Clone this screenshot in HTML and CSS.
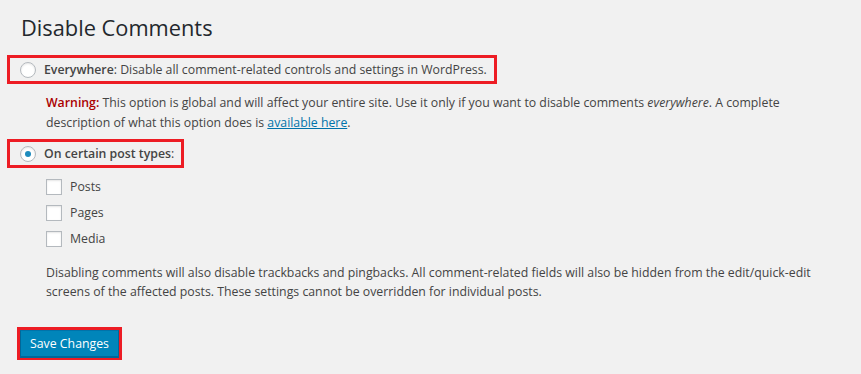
FILE: index.html
```html
<!DOCTYPE html>
<html>
<head>
<meta charset="utf-8">
<link rel="stylesheet" href="styles.css">
</head>
<body>
<div class="wrap">
  <h1 class="title">Disable Comments</h1>
  <form class="form">
    <div class="mark mark-first">
      <span class="radio"></span>
      <span class="label"><strong>Everywhere</strong>: Disable all comment-related controls and settings in WordPress.</span>
    </div>
    <p class="indent warning"><strong class="warn">Warning:</strong> This option is global and will affect your entire site. Use it only if you want to disable comments <em>everywhere</em>. A complete description of what this option does is <a href="#" class="link">available here</a>.</p>
    <div class="mark">
      <span class="radio checked"></span>
      <span class="label"><strong>On certain post types</strong>:</span>
    </div>
    <ul class="indent types">
      <li class="type"><span class="checkbox"></span>Posts</li>
      <li class="type"><span class="checkbox"></span>Pages</li>
      <li class="type"><span class="checkbox"></span>Media</li>
    </ul>
    <p class="indent desc">Disabling comments will also disable trackbacks and pingbacks. All comment-related fields will also be hidden from the edit/quick-edit screens of the affected posts. These settings cannot be overridden for individual posts.</p>
    <div class="mark mark-btn">
      <button type="button" class="button">Save Changes</button>
    </div>
  </form>
</div>
</body>
</html>
```
FILE: styles.css
```css
html, body {
  margin: 0;
  padding: 0;
  background: #f1f1f1;
}
body {
  font-family: "Open Sans", "Noto Sans", sans-serif;
  font-size: 12.3px;
  color: #444;
  line-height: 20px;
}
.wrap {
  padding: 0 10px 0 7px;
}
.title {
  margin: 0;
  padding: 13px 0 0 14px;
  font-size: 21.8px;
  font-weight: 400;
  line-height: 29px;
  color: #23282d;
}
.form {
  display: flex;
  flex-direction: column;
  align-items: flex-start;
  margin-top: 13px;
}
.mark {
  display: inline-flex;
  align-items: center;
  gap: 8px;
  border: 3px solid #ed1c24;
  height: 23px;
  padding: 0 7px 0 10px;
}
.label strong {
  font-weight: 600;
}
.radio {
  width: 14px;
  height: 14px;
  border: 1px solid #b4b9be;
  border-radius: 50%;
  background: #fff;
  box-shadow: inset 0 1px 2px rgba(0,0,0,.1);
  display: flex;
  align-items: center;
  justify-content: center;
  flex: none;
}
.radio.checked::before {
  content: "";
  width: 6px;
  height: 6px;
  border-radius: 50%;
  background: #1e8cbe;
}
.indent {
  margin: 0;
  padding-left: 39px;
}
.warning {
  margin-top: 9px;
  margin-bottom: 6px;
  max-width: 790px;
}
.warn {
  color: #a00;
  font-weight: 600;
}
.link {
  color: #0073aa;
  text-decoration: underline;
}
.types {
  list-style: none;
  margin: 9px 0 0;
  display: flex;
  flex-direction: column;
  gap: 6px;
}
.type {
  display: flex;
  align-items: center;
  gap: 8px;
  height: 20px;
}
.checkbox {
  width: 14px;
  height: 14px;
  border: 1px solid #b4b9be;
  background: #fff;
  box-shadow: inset 0 1px 2px rgba(0,0,0,.1);
  flex: none;
}
.desc {
  margin-top: 14px;
  max-width: 800px;
  line-height: 19px;
}
.mark-btn {
  margin-top: 26px;
  margin-left: 10px;
  height: auto;
  padding: 0;
  border-width: 3px;
}
.button {
  font-family: inherit;
  font-size: 12.3px;
  color: #fff;
  background: #0085ba;
  border: 1px solid #0073aa;
  border-color: #0073aa #006799 #006799;
  box-shadow: 0 1px 0 #006799;
  border-radius: 0;
  height: 27px;
  width: 99px;
  padding: 0;
  line-height: 25px;
  cursor: pointer;
}
```
